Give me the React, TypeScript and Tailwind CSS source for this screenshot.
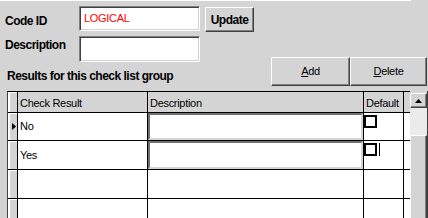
import React from 'react';

const raised =
  'border border-t-white border-l-white border-b-[#404040] border-r-[#404040] shadow-[inset_-1px_-1px_0_#808080] bg-[#d4d4d4]';
const sunken =
  'border border-t-[#808080] border-l-[#808080] border-b-white border-r-white shadow-[inset_1px_1px_0_#404040,inset_-1px_-1px_0_#d4d4d4] bg-white';
const sunkenCell =
  'border-2 border-t-[#707070] border-l-[#707070] border-b-[#d4d4d4] border-r-[#d4d4d4] bg-white';
const label = 'text-[12px] font-bold tracking-[-0.5px] leading-[14px] text-black';
const plain = 'text-[11px] tracking-[-0.3px] leading-[13px] text-black';

interface Row {
  result: string;
  current?: boolean;
  editable?: boolean;
  cursor?: boolean;
}

const rows: Row[] = [
  { result: 'No', current: true, editable: true },
  { result: 'Yes', editable: true, cursor: true },
  { result: '' },
  { result: '' },
];

const RowHeader: React.FC<{ current?: boolean }> = ({ current }) => (
  <div className="w-[10px] shrink-0 border-r border-black bg-[#d4d4d4] shadow-[inset_2px_1px_0_white] flex items-center justify-end pr-[1px]">
    {current && (
      <svg width="4" height="7" viewBox="0 0 4 7">
        <path d="M0 0 L4 3.5 L0 7 Z" fill="black" />
      </svg>
    )}
  </div>
);

const App: React.FC = () => {
  return (
    <div className="w-[428px] h-[218px] overflow-hidden bg-[#d4d4d4] font-['Liberation_Sans',Arial,sans-serif]">
      <div className="h-[1px] w-[411px] bg-white" />
      <div className="flex h-[90px]">
        <div className="flex-1 pt-[5px]">
          <div className="flex items-start h-[25px]">
            <div className={`w-[79px] pl-[5px] mt-[8px] ${label}`}>Code ID</div>
            <div className={`w-[121px] h-[25px] ${sunken} flex items-center pl-[4px]`}>
              <span className="text-[11px] tracking-[-0.3px] text-[#ff0000]">LOGICAL</span>
            </div>
            <div className={`ml-[5px] mt-[1px] w-[49px] h-[25px] ${raised} flex items-center justify-center`}>
              <span className={label}>Update</span>
            </div>
          </div>
          <div className="flex items-start mt-[5px] h-[26px]">
            <div className={`w-[79px] pl-[5px] mt-[2px] ${label}`}>Description</div>
            <div className={`w-[121px] h-[26px] ${sunken}`} />
          </div>
          <div className={`mt-[7px] pl-[7px] ${label}`}>Results for this check list group</div>
        </div>
        <div className="flex items-end pr-[1px] pb-[5px]">
          <div className={`w-[79px] h-[29px] ${raised} flex items-center justify-center`}>
            <span className={plain}>
              <span className="underline">A</span>dd
            </span>
          </div>
          <div className={`w-[77px] h-[29px] ${raised} flex items-center justify-center`}>
            <span className={plain}>
              <span className="underline">D</span>elete
            </span>
          </div>
        </div>
      </div>

      <div className="flex ml-[7px]">
        <div className="flex-1 border-t border-black border-l border-l-[#404040]">
          <div className="flex h-[21px] border-b border-black bg-[#d4d4d4]">
            <RowHeader />
            <div className={`w-[130px] shrink-0 border-r border-black pl-[2px] pt-[5px] ${plain}`}>Check Result</div>
            <div className={`w-[216px] shrink-0 border-r border-black pl-[2px] pt-[5px] ${plain}`}>Description</div>
            <div className={`w-[40px] shrink-0 border-r border-black pl-[2px] pt-[5px] ${plain}`}>Default</div>
            <div className="flex-1" />
          </div>
          {rows.map((r, i) => (
            <div key={i} className={`flex ${i === 0 ? 'h-[28px]' : 'h-[29px]'} border-b border-black bg-white`}>
              <RowHeader current={r.current} />
              <div className={`w-[130px] shrink-0 border-r border-black pl-[2px] flex items-center ${plain}`}>
                {r.result}
              </div>
              <div className="w-[216px] shrink-0 border-r border-black">
                {r.editable && <div className={`w-full h-full ${sunkenCell}`} />}
              </div>
              <div className="w-[40px] shrink-0 border-r border-black flex items-start pt-[2px]">
                {r.editable && (
                  <>
                    <div className="w-[13px] h-[13px] border-2 border-black bg-white" />
                    {r.cursor && <div className="ml-[2px] w-[1px] h-[13px] bg-black" />}
                  </>
                )}
              </div>
              <div className="flex-1" />
            </div>
          ))}
        </div>
        <div className="w-[18px] flex flex-col pt-[2px] border-r border-[#404040]">
          <div className={`h-[15px] ${raised} flex items-center justify-center`}>
            <svg width="7" height="4" viewBox="0 0 7 4">
              <path d="M3.5 0 L7 4 L0 4 Z" fill="black" />
            </svg>
          </div>
          <div className="h-[27px] bg-[#ebebeb]" />
          <div className={`flex-1 h-[100px] ${raised}`} />
        </div>
      </div>
    </div>
  );
};

export default App;
